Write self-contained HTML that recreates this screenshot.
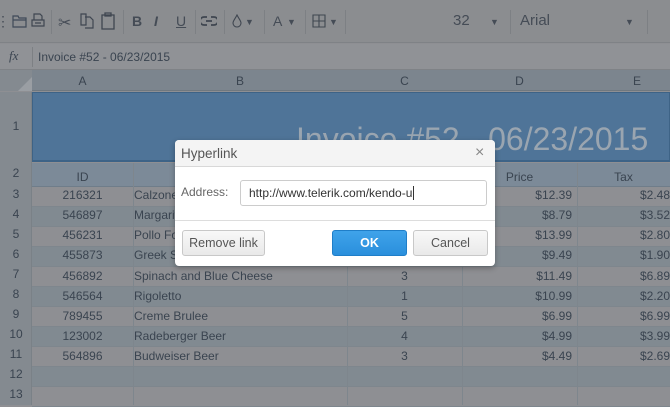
<!DOCTYPE html>
<html><head><style>
*{margin:0;padding:0;box-sizing:border-box}
body{width:670px;height:405px;overflow:hidden;background:#8e8f93;font-family:"Liberation Sans",Arial,sans-serif;position:relative;color:#3a4450}
.a{position:absolute}
.tb{left:0;top:0;width:670px;height:43px;background:#8b8d90;border-bottom:1px solid #7f8286}
.sep{position:absolute;top:10px;width:1px;height:24px;background:#7d8084}
.ic{position:absolute;top:13px;font-size:14px;color:#454c56}
.fb{left:0;top:44px;width:670px;height:26px;background:#909296;border-bottom:1px solid #7f8286}
.cell{position:absolute;font-size:12px;line-height:20px;white-space:nowrap;overflow:hidden}
.row{position:absolute;left:32px;width:638px;height:20px;border-bottom:1px solid #7e868d}
.rn{position:absolute;left:0;width:32px;text-align:center;font-size:12px;color:#3a4450;line-height:20px}
.vl{position:absolute;width:1px;background:#7e868d}
.btn{position:absolute;height:26px;border:1px solid #c8c8c8;border-radius:3px;background:linear-gradient(#f8f8f8,#e9e9e9);font-size:12.5px;color:#555;text-align:center;line-height:24px}
</style></head><body>
<div class="a tb">
<div class="ic" style="left:-4px">⋮</div>
<svg class="a" style="left:12px;top:14px" width="16" height="14" viewBox="0 0 16 14"><path d="M1 2h5l1 2h7v9H1z M1 6h13" fill="none" stroke="#3f4a58" stroke-width="1.2"/></svg>
<svg class="a" style="left:31px;top:13px" width="14" height="16" viewBox="0 0 14 16"><path d="M3 1h6l2 2v4H3z M1 7h12v6H1z M4 10h6" fill="none" stroke="#3f4650" stroke-width="1.2"/></svg>
<div class="sep" style="left:51px"></div>
<div class="ic" style="left:58px;font-size:16px">✂</div>
<svg class="a" style="left:80px;top:13px" width="14" height="16" viewBox="0 0 14 16"><path d="M1 1h5v11H1z M5 4h5l3 3v8H5" fill="none" stroke="#3f4650" stroke-width="1.2"/></svg>
<svg class="a" style="left:101px;top:12px" width="14" height="18" viewBox="0 0 14 18"><path d="M1 3h12v14H1z M4 1h6v3H4z" fill="none" stroke="#3f4650" stroke-width="1.3"/></svg>
<div class="sep" style="left:123px"></div>
<div class="ic" style="left:132px;font-weight:bold">B</div>
<div class="ic" style="left:154px;font-style:italic;font-weight:bold">I</div>
<div class="ic" style="left:176px;text-decoration:underline">U</div>
<div class="sep" style="left:195px"></div>
<svg class="a" style="left:201px;top:16px" width="16" height="10" viewBox="0 0 16 10"><path d="M6 1H3a4 4 0 0 0 0 8h3M10 1h3a4 4 0 0 1 0 8h-3M5 5h6" fill="none" stroke="#3f4650" stroke-width="1.8"/></svg>
<div class="sep" style="left:224px"></div>
<svg class="a" style="left:232px;top:14px" width="10" height="14" viewBox="0 0 10 14"><path d="M5 1C3 5 1 7 1 9a4 4 0 0 0 8 0C9 7 7 5 5 1z" fill="none" stroke="#3f4650" stroke-width="1.1"/></svg>
<div class="ic" style="left:245px;font-size:9px;top:17px">▼</div>
<div class="sep" style="left:264px"></div>
<div class="ic" style="left:273px">A</div>
<div class="ic" style="left:287px;font-size:9px;top:17px">▼</div>
<div class="sep" style="left:305px"></div>
<svg class="a" style="left:312px;top:14px" width="14" height="14" viewBox="0 0 14 14"><path d="M1 1h12v12H1zM7 1v12M1 7h12" fill="none" stroke="#3f4650" stroke-width="1.1"/></svg>
<div class="ic" style="left:329px;font-size:9px;top:17px">▼</div>
<div class="sep" style="left:345px"></div>
<div class="ic" style="left:453px;top:12px;font-size:15px">32</div>
<div class="ic" style="left:490px;font-size:9px;top:17px">▼</div>
<div class="sep" style="left:510px"></div>
<div class="ic" style="left:520px;top:12px;font-size:15px">Arial</div>
<div class="ic" style="left:625px;font-size:9px;top:17px">▼</div>
<div class="sep" style="left:647px"></div>
</div>
<div class="a fb">
<div class="a" style="left:9px;top:4px;font-family:'Liberation Serif',serif;font-style:italic;font-size:13px;color:#3a4450">fx</div>
<div class="a" style="left:32px;top:3px;width:1px;height:20px;background:#7d8084"></div>
<div class="a" style="left:38px;top:6px;font-size:12px;color:#3a4450">Invoice #52 - 06/23/2015</div>
</div>
<div class="a" style="left:0;top:70px;width:670px;height:21px;background:#7c858e;border-bottom:1px solid #6f7880"></div>
<div class="a" style="left:0;top:70px;width:32px;height:21px;background:#848a90"></div>
<div class="a" style="left:18px;top:77px;width:0;height:0;border-left:14px solid transparent;border-bottom:14px solid #9a9ea3"></div>
<div class="cell" style="left:32px;top:71px;width:101px;text-align:center">A</div>
<div class="cell" style="left:133px;top:71px;width:214px;text-align:center">B</div>
<div class="cell" style="left:347px;top:71px;width:115px;text-align:center">C</div>
<div class="cell" style="left:462px;top:71px;width:115px;text-align:center">D</div>
<div class="cell" style="left:577px;top:71px;width:120px;text-align:center">E</div>
<div class="a" style="left:0;top:92px;width:32px;height:313px;background:#848a90;border-right:1px solid #7a8187"></div>
<div class="a" style="left:32px;top:92px;width:638px;height:70px;background:#4f7498;border:1px solid #3e6386;border-bottom:2px solid #3d6387"></div>
<div class="a" style="left:296px;top:121px;font-size:32px;color:#9aa5b0;white-space:nowrap">Invoice #52 - 06/23/2015</div>
<div class="rn" style="top:116px">1</div>
<div class="a" style="left:32px;top:163px;width:638px;height:24px;background:#7c8a98;border-bottom:1px solid #6f7d8a"></div>
<div class="cell" style="left:32px;top:167px;width:101px;text-align:center">ID</div>
<div class="cell" style="left:462px;top:167px;width:115px;text-align:center">Price</div>
<div class="cell" style="left:577px;top:167px;width:93px;text-align:center">Tax</div>
<div class="rn" style="top:163px">2</div>

<div class="row" style="top:187px;background:#8e8f93"></div><div class="rn" style="top:184px">3</div>
<div class="row" style="top:207px;background:#818a91"></div><div class="rn" style="top:204px">4</div>
<div class="row" style="top:227px;background:#8e8f93"></div><div class="rn" style="top:224px">5</div>
<div class="row" style="top:247px;background:#818a91"></div><div class="rn" style="top:244px">6</div>
<div class="row" style="top:267px;background:#8e8f93"></div><div class="rn" style="top:264px">7</div>
<div class="row" style="top:287px;background:#818a91"></div><div class="rn" style="top:284px">8</div>
<div class="row" style="top:307px;background:#8e8f93"></div><div class="rn" style="top:304px">9</div>
<div class="row" style="top:327px;background:#818a91"></div><div class="rn" style="top:324px">10</div>
<div class="row" style="top:347px;background:#8e8f93"></div><div class="rn" style="top:344px">11</div>
<div class="row" style="top:367px;background:#818a91"></div><div class="rn" style="top:364px">12</div>
<div class="row" style="top:387px;background:#8e8f93"></div><div class="rn" style="top:384px">13</div>
<div class="vl" style="left:133px;top:163px;height:242px"></div>
<div class="vl" style="left:347px;top:163px;height:242px"></div>
<div class="vl" style="left:462px;top:163px;height:242px"></div>
<div class="vl" style="left:577px;top:163px;height:242px"></div>

<div style="position:absolute;left:0;top:0;font-size:12px">
<div class="cell" style="left:32px;top:185px;width:101px;text-align:center">216321</div><div class="cell" style="left:134px;top:185px">Calzone</div><div class="cell" style="left:462px;top:185px;width:110px;text-align:right">$12.39</div><div class="cell" style="left:577px;top:185px;width:93px;text-align:right">$2.48</div>
<div class="cell" style="left:32px;top:205px;width:101px;text-align:center">546897</div><div class="cell" style="left:134px;top:205px">Margarita</div><div class="cell" style="left:462px;top:205px;width:110px;text-align:right">$8.79</div><div class="cell" style="left:577px;top:205px;width:93px;text-align:right">$3.52</div>
<div class="cell" style="left:32px;top:225px;width:101px;text-align:center">456231</div><div class="cell" style="left:134px;top:225px">Pollo Formaggio</div><div class="cell" style="left:462px;top:225px;width:110px;text-align:right">$13.99</div><div class="cell" style="left:577px;top:225px;width:93px;text-align:right">$2.80</div>
<div class="cell" style="left:32px;top:245px;width:101px;text-align:center">455873</div><div class="cell" style="left:134px;top:245px">Greek Salad</div><div class="cell" style="left:462px;top:245px;width:110px;text-align:right">$9.49</div><div class="cell" style="left:577px;top:245px;width:93px;text-align:right">$1.90</div>
<div class="cell" style="left:32px;top:266px;width:101px;text-align:center">456892</div><div class="cell" style="left:134px;top:266px">Spinach and Blue Cheese</div><div class="cell" style="left:347px;top:266px;width:115px;text-align:center">3</div><div class="cell" style="left:462px;top:266px;width:110px;text-align:right">$11.49</div><div class="cell" style="left:577px;top:266px;width:93px;text-align:right">$6.89</div>
<div class="cell" style="left:32px;top:286px;width:101px;text-align:center">546564</div><div class="cell" style="left:134px;top:286px">Rigoletto</div><div class="cell" style="left:347px;top:286px;width:115px;text-align:center">1</div><div class="cell" style="left:462px;top:286px;width:110px;text-align:right">$10.99</div><div class="cell" style="left:577px;top:286px;width:93px;text-align:right">$2.20</div>
<div class="cell" style="left:32px;top:306px;width:101px;text-align:center">789455</div><div class="cell" style="left:134px;top:306px">Creme Brulee</div><div class="cell" style="left:347px;top:306px;width:115px;text-align:center">5</div><div class="cell" style="left:462px;top:306px;width:110px;text-align:right">$6.99</div><div class="cell" style="left:577px;top:306px;width:93px;text-align:right">$6.99</div>
<div class="cell" style="left:32px;top:326px;width:101px;text-align:center">123002</div><div class="cell" style="left:134px;top:326px">Radeberger Beer</div><div class="cell" style="left:347px;top:326px;width:115px;text-align:center">4</div><div class="cell" style="left:462px;top:326px;width:110px;text-align:right">$4.99</div><div class="cell" style="left:577px;top:326px;width:93px;text-align:right">$3.99</div>
<div class="cell" style="left:32px;top:346px;width:101px;text-align:center">564896</div><div class="cell" style="left:134px;top:346px">Budweiser Beer</div><div class="cell" style="left:347px;top:346px;width:115px;text-align:center">3</div><div class="cell" style="left:462px;top:346px;width:110px;text-align:right">$4.49</div><div class="cell" style="left:577px;top:346px;width:93px;text-align:right">$2.69</div>
</div>

<div class="a" style="left:175px;top:140px;width:320px;height:126px;background:#fff;border-radius:4px;box-shadow:0 2px 6px rgba(0,0,0,.3);overflow:hidden">
<div class="a" style="left:0;top:0;width:320px;height:27px;background:#f4f4f4;border-bottom:1px solid #d8d8d8"></div>
<div class="a" style="left:6px;top:6px;font-size:13.5px;color:#555">Hyperlink</div>
<div class="a" style="left:300px;top:4px;font-size:16px;color:#888">×</div>
<div class="a" style="left:6px;top:45px;font-size:12px;color:#666">Address:</div>
<div class="a" style="left:65px;top:40px;width:247px;height:26px;border:1px solid #ccc;border-radius:3px;font-size:12px;color:#333;padding:6px 8px;line-height:13px">http://www.telerik.com/kendo-u<span style="border-left:1px solid #333;margin-left:1px"></span></div>
<div class="a" style="left:0;top:80px;width:320px;height:1px;background:#ddd"></div>
<div class="btn" style="left:7px;top:90px;width:83px">Remove link</div>
<div class="btn" style="left:157px;top:90px;width:75px;background:linear-gradient(#3fa3ea,#2a8fdc);border-color:#1f7ec8;color:#fff;font-weight:bold">OK</div>
<div class="btn" style="left:238px;top:90px;width:75px">Cancel</div>
</div>
</body></html>
